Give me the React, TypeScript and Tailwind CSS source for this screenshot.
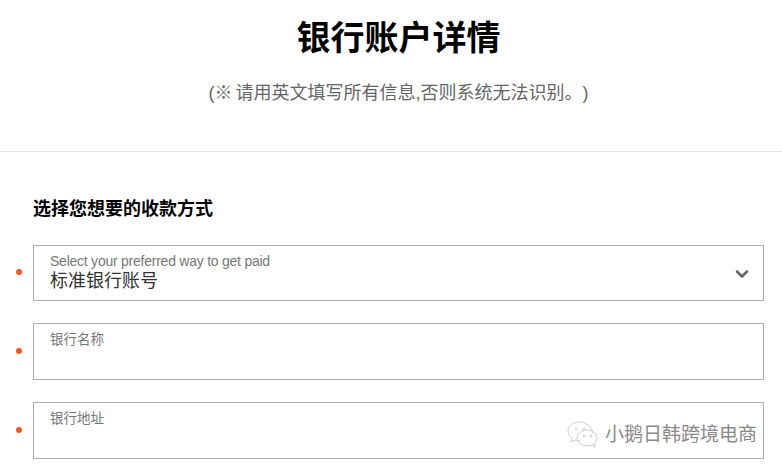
import React from 'react';
import { ChevronDown } from 'lucide-react';

const font = { fontFamily: '"Liberation Sans", "Noto Sans CJK SC", sans-serif' };

const Dot: React.FC = () => (
  <span className="absolute left-[-18px] top-1/2 mt-[-1px] h-[6px] w-[6px] -translate-y-1/2 rounded-full bg-[#f0552e]" />
);

const Field: React.FC<{ label: string; height: string }> = ({ label, height }) => (
  <div className={`relative border border-[#aaaeb2] px-4 pt-[7px] ${height}`}>
    <Dot />
    <div className="text-[13.5px] leading-[18px] text-[#777]">{label}</div>
  </div>
);

export default function App() {
  return (
    <div style={font} className="relative h-[469px] w-[782px] overflow-hidden bg-white">
      <header className="h-[152px] border-b border-[#e6e6e6] pl-[33px] pr-[18px] text-center">
        <h1 className="pt-[15px] text-[34px] font-bold leading-[46px] text-black">银行账户详情</h1>
        <p className="mt-[20px] text-[18px] leading-[24px] text-[#666]">
          (※ <span className="-ml-[2px]">请用英文填写所有信息,否则系统无法识别。</span>
          <span className="ml-[9px]">)</span>
        </p>
      </header>

      <div className="pl-[33px] pr-[18px] pt-[45px]">
        <h2 className="text-[18px] font-bold leading-[24px] text-black">选择您想要的收款方式</h2>

        <div className="mt-[24px] flex flex-col gap-[22px]">
          <div className="relative flex h-[56px] items-center justify-between border border-[#aaaeb2] pl-4 pr-[11px]">
            <Dot />
            <div>
              <div className="text-[14px] leading-[16px] tracking-[-0.24px] text-[#777]">Select your preferred way to get paid</div>
              <div className="text-[18px] leading-[24px] text-[#333]">标准银行账号</div>
            </div>
            <ChevronDown size={20} strokeWidth={3} className="mt-[1px] text-[#666]" />
          </div>
          <Field label="银行名称" height="h-[57px]" />
          <Field label="银行地址" height="h-[57px]" />
        </div>
      </div>

      {/* watermark */}
      <div className="absolute left-[566px] top-[421px] flex items-center gap-[5px] text-[#8a8a8a]">
        <svg width="34" height="28" viewBox="0 0 34 28" fill="none" stroke="#cfcfcf" strokeWidth="1">
          <path d="M14 1C7 1 2 5 2 10c0 3 1.500 5 4 7l-1 4 4-2c2 .8 4 1 6 .8" />
          <path d="M27 12c-1-6-7-11-13-11" />
          <ellipse cx="21" cy="17" rx="10" ry="8" />
          <path d="M27 24l2 3-.5-4" />
          <circle cx="10" cy="8" r="1" />
          <circle cx="18" cy="8" r="1" />
          <circle cx="18" cy="15" r="1" />
          <circle cx="25" cy="15" r="1" />
        </svg>
        <span className="text-[19px] leading-[28px]">小鹅日韩跨境电商</span>
      </div>
    </div>
  );
}
